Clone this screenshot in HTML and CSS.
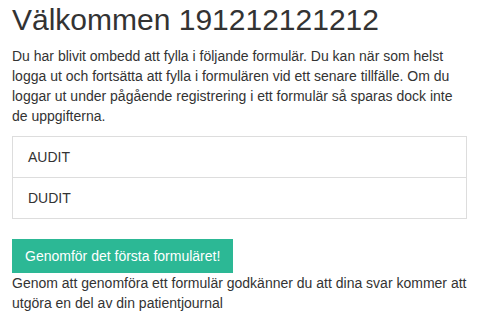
FILE: index.html
```html
<!DOCTYPE html>
<html lang="sv">
<head>
<meta charset="utf-8">
<title>Välkommen</title>
<link rel="stylesheet" href="styles.css">
</head>
<body>
<div class="container">
  <h1 class="title">Välkommen 191212121212</h1>
  <p class="intro">Du har blivit ombedd att fylla i följande formulär. Du kan när som helst logga ut och fortsätta att fylla i formulären vid ett senare tillfälle. Om du loggar ut under pågående registrering i ett formulär så sparas dock inte de uppgifterna.</p>
  <ul class="list-group">
    <li class="list-item">AUDIT</li>
    <li class="list-item">DUDIT</li>
  </ul>
  <button class="btn-start" type="button">Genomför det första formuläret!</button>
  <p class="note">Genom att genomföra ett formulär godkänner du att dina svar kommer att utgöra en del av din patientjournal</p>
</div>
</body>
</html>
```
FILE: styles.css
```css
html, body {
  margin: 0;
  padding: 0;
  background: #fff;
}
body {
  font-family: "Liberation Sans", Arial, sans-serif;
  font-size: 14px;
  line-height: 20px;
  color: #333;
}
.container {
  width: 455px;
  padding: 3px 0 0 12px;
}
.title {
  margin: 0 0 10px;
  font-size: 30px;
  font-weight: 500;
  line-height: 33px;
  color: #333;
}
.intro {
  margin: 0 0 10px;
}
.list-group {
  list-style: none;
  margin: 0 0 20px;
  padding: 0;
  border: 1px solid #ddd;
}
.list-item {
  padding: 10px 15px;
}
.list-item + .list-item {
  border-top: 1px solid #ddd;
}
.btn-start {
  display: block;
  margin: 0;
  padding: 6px 12px;
  font-family: inherit;
  font-size: 14px;
  line-height: 20px;
  color: #fff;
  background: #2cb895;
  border: 1px solid #2cb895;
  border-radius: 0;
  cursor: pointer;
}
.note {
  margin: 0;
}
```
